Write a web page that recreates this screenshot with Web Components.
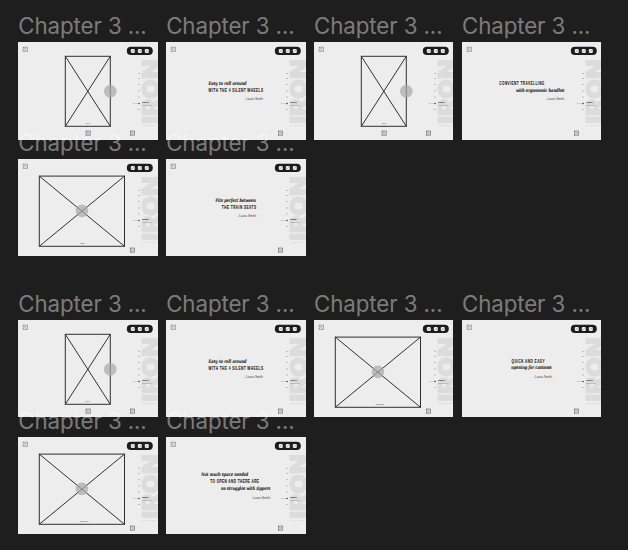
<!DOCTYPE html>
<html lang="en"><head><meta charset="utf-8"><title>Storyboard</title>
<style>html,body{margin:0;height:100%;background:#1e1e1e;overflow:hidden}</style></head>
<body><story-canvas></story-canvas>
<script>
const NS = 'lengthAdjust="spacingAndGlyphs"';
const icon = (x, y, s, c) => `<g fill="none" stroke="${c}" stroke-width=".55"><rect x="${x}" y="${y}" width="${s}" height="${s}"/><path d="M${x} ${y + s}L${x + s} ${y}M${x} ${y}l${s} ${s}" stroke-width=".4"/></g>`;

class StoryFrame extends HTMLElement {
  connectedCallback() {
    const kind = this.getAttribute('kind');
    const tag = this.getAttribute('tag') || '';
    let body = '';
    if (kind === 'portrait' || kind === 'landscape') {
      const p = kind === 'portrait';
      const [x, y, r, b] = p ? [47.3, 14.3, 92.3, 84.3] : [21.3, 17.1, 106.5, 87.3];
      const cx = p ? 92.3 : 63.9, cy = p ? 49.2 : 51.9, w = p ? 4 : (tag.length > 5 ? 8.3 : 4.6);
      body = `<g fill="none" stroke="#303030" stroke-width="1"><rect x="${x}" y="${y}" width="${r - x}" height="${b - y}"/><path d="M${x} ${y}L${r} ${b}M${r} ${y}L${x} ${b}"/></g>
        <circle cx="${cx}" cy="${cy}" r="6.3" fill="#a8a8a8" fill-opacity=".7"/>
        <text class="tiny" x="${p ? 70.1 : tag.length > 5 ? 65.8 : 64.3}" y="${p ? 82.3 : 84.6}" text-anchor="middle" textLength="${w}" ${NS}>${tag}</text>
        ${p ? icon(68, 89, 4.2, '#555') : ''}`;
    } else {
      body = JSON.parse(this.getAttribute('lines')).map(([c, x, y, w, t]) => c === 'c'
        ? `<text class="c" transform="translate(${x},${y + .2}) scale(.6,1)" textLength="${w / .6}">${t}</text>`
        : `<text class="${c}" x="${x}" y="${y + .2}" textLength="${w}" ${NS}>${t}</text>`).join('');
    }
    const ticks = [31.4, 36.5, 42.6, 49, 55, 67.5].map(y => `<rect x="120.1" y="${y - .5}" width="1.7" height="1" fill="#b4b4b4"/>`).join('');
    this.attachShadow({ mode: 'open' }).innerHTML = `<style>
      :host{display:block;position:relative;width:139.3px;height:97.2px}
      header{position:absolute;left:-.1px;top:-32.4px;z-index:2;white-space:nowrap;font:22.3px/32px Inter,"Liberation Sans",sans-serif;letter-spacing:-.1px;color:rgba(255,255,255,.43)}
      svg{display:block;width:139.3px;height:97.2px;background:#ededed}
      text{fill:#222}
      .s{font:italic bold 4.9px "DejaVu Serif","Liberation Serif",serif;stroke:#222;stroke-width:.12}
      .c{font:bold 5.2px "Liberation Sans",sans-serif;stroke:#222;stroke-width:.1}
      .a{font:3.5px "Liberation Sans",sans-serif;fill:#444}
      .tiny{font:2px "Liberation Sans",sans-serif;fill:#444}
      .big{font:900 22.5px Inter,"Liberation Sans",sans-serif;fill:#dcdcdc;stroke:#dcdcdc;stroke-width:.8}
    </style><header><slot></slot></header>
    <svg viewBox="0 0 139.3 97.2">
      <text class="big" transform="translate(141,80.8) rotate(-90)" x="-.8" y="0" textLength="64.5" ${NS}>IRON</text>
      ${icon(5.1, 5.1, 4.2, '#777')}
      <rect x="108.8" y="4.8" width="26" height="8.2" rx="4.1" fill="#1c1c1c"/>
      ${[114.8, 121.8, 128.8].map(x => `<rect x="${x - 2}" y="7" width="4" height="4" rx="1" fill="#eee"/><path d="M${x - 1.5} 10.5l3-3" stroke="#777" stroke-width=".6"/>`).join('')}
      ${body}${ticks}
      <text class="tiny" x="115" y="62.2" textLength="3.8" ${NS}>6 / 7</text>
      <circle cx="121" cy="61.5" r=".8" fill="#333"/>
      <text class="tiny" x="124.1" y="61" style="font-weight:bold;font-size:2.4px;fill:#111" textLength="6.8" ${NS}>${this.getAttribute('topic')}</text>
      <text class="tiny" x="124.1" y="64" style="fill:#777" textLength="10" ${NS}>Chapter three</text>
      <text class="tiny" x="124.3" y="84" style="fill:#d0d0d0" textLength="14" ${NS}>SUITCASE</text>
      ${icon(112.4, 89, 4.2, '#555')}
    </svg>`;
  }
}
customElements.define('story-frame', StoryFrame);

const wheels = [['s', 42.6, 42.4, 38, 'Easy to roll around'], ['c', 42.6, 49.7, 54.4, 'WITH THE 4 SILENT WHEELS'], ['a', 78, 58, 19, '- Laura Smith']];
const frame = (kind, topic, extra) => `<story-frame kind="${kind}" topic="${topic}" ${kind === 'quote' ? `lines='${JSON.stringify(extra)}'` : `tag="${extra}"`}>Chapter 3 ...</story-frame>`;
class StoryCanvas extends HTMLElement {
  connectedCallback() {
    this.attachShadow({ mode: 'open' }).innerHTML = `<style>
      :host{display:block;box-sizing:border-box;width:628px;height:550px;padding:42.4px 0 0 18.4px;background:#1e1e1e}
      section{display:grid;grid-template-columns:repeat(4,139.3px);column-gap:8.6px;row-gap:19.7px}
      section+section{margin-top:63.6px}
    </style>
    <section>
      ${frame('portrait', 'Wheels', 'wheel')}
      ${frame('quote', 'Wheels', wheels)}
      ${frame('portrait', 'Handle', 'hand')}
      ${frame('quote', 'Handle', [['c', 37.3, 42.8, 45, 'CONVIENT TRAVELLING'], ['s', 53.9, 49.4, 48.3, 'with ergonomic handles'], ['a', 83.4, 57.9, 18.8, '- Laura Smith']])}
      ${frame('landscape', 'Shape', 'train')}
      ${frame('quote', 'Shape', [['s', 49.5, 42.4, 40.3, 'Fits perfect between'], ['c', 55.8, 49.5, 34.2, 'THE TRAIN SEATS'], ['a', 71, 58, 19, '- Laura Smith']])}
    </section>
    <section>
      ${frame('portrait', 'Wheels', 'wheel')}
      ${frame('quote', 'Wheels', wheels)}
      ${frame('landscape', 'Zippers', 'customs')}
      ${frame('quote', 'Zippers', [['c', 49.5, 42.5, 33, 'QUICK AND EASY'], ['s', 49.3, 48.9, 40.3, 'opening for customs'], ['a', 71, 57.6, 19, '- Laura Smith']])}
      ${frame('landscape', 'Space', 'zippers')}
      ${frame('quote', 'Space', [['s', 35.3, 38.8, 47, 'Not much space needed'], ['c', 44.3, 46.2, 48.6, 'TO OPEN AND THERE ARE'], ['s', 55, 52.9, 49.3, 'no struggles with zippers'], ['a', 85, 61.6, 19.3, '- Laura Smith']])}
    </section>`;
  }
}
customElements.define('story-canvas', StoryCanvas);
</script></body></html>
